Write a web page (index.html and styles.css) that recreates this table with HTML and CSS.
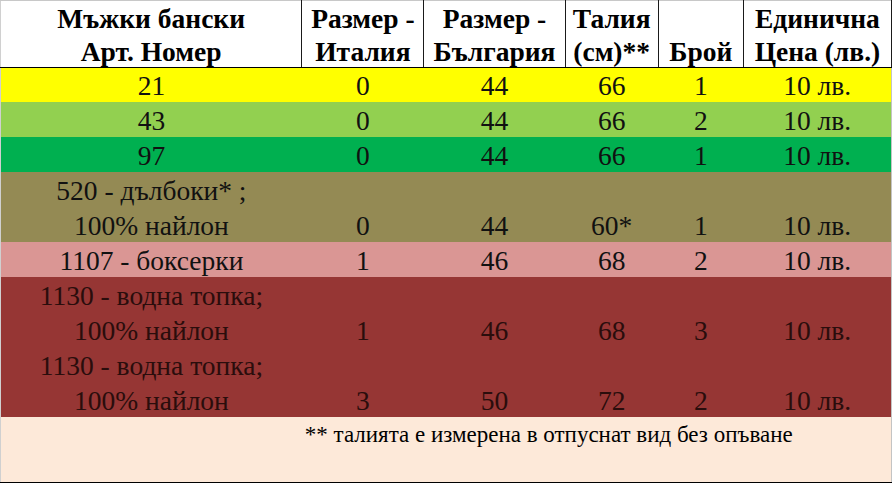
FILE: index.html
```html
<!DOCTYPE html>
<html lang="bg">
<head>
<meta charset="utf-8">
<title>Мъжки бански</title>
<link rel="stylesheet" href="styles.css">
</head>
<body>
<table class="sheet">
  <colgroup>
    <col class="w1"><col class="w2"><col class="w3"><col class="w4"><col class="w5"><col class="w6">
  </colgroup>
  <thead>
    <tr class="head">
      <th><span class="t">Мъжки бански<br>Арт. Номер</span></th>
      <th><span class="t">Размер -<br>Италия</span></th>
      <th><span class="t">Размер -<br>България</span></th>
      <th><span class="t">Талия<br>(см)**</span></th>
      <th><span class="t">Брой</span></th>
      <th><span class="t">Единична<br>Цена (лв.)</span></th>
    </tr>
  </thead>
  <tbody>
    <tr class="r-yellow first">
      <td><span class="t">21</span></td><td><span class="t">0</span></td><td><span class="t">44</span></td><td><span class="t">66</span></td><td><span class="t">1</span></td><td><span class="t">10 лв.</span></td>
    </tr>
    <tr class="r-lime">
      <td><span class="t">43</span></td><td><span class="t">0</span></td><td><span class="t">44</span></td><td><span class="t">66</span></td><td><span class="t">2</span></td><td><span class="t">10 лв.</span></td>
    </tr>
    <tr class="r-green">
      <td><span class="t">97</span></td><td><span class="t">0</span></td><td><span class="t">44</span></td><td><span class="t">66</span></td><td><span class="t">1</span></td><td><span class="t">10 лв.</span></td>
    </tr>
    <tr class="r-olive">
      <td><span class="t">520 - дълбоки* ;<br>100% найлон</span></td><td><span class="t">0</span></td><td><span class="t">44</span></td><td><span class="t">60*</span></td><td><span class="t">1</span></td><td><span class="t">10 лв.</span></td>
    </tr>
    <tr class="r-pink">
      <td><span class="t">1107 - боксерки</span></td><td><span class="t">1</span></td><td><span class="t">46</span></td><td><span class="t">68</span></td><td><span class="t">2</span></td><td><span class="t">10 лв.</span></td>
    </tr>
    <tr class="r-red">
      <td><span class="t">1130 - водна топка;<br>100% найлон</span></td><td><span class="t">1</span></td><td><span class="t">46</span></td><td><span class="t">68</span></td><td><span class="t">3</span></td><td><span class="t">10 лв.</span></td>
    </tr>
    <tr class="r-red">
      <td><span class="t">1130 - водна топка;<br>100% найлон</span></td><td><span class="t">3</span></td><td><span class="t">50</span></td><td><span class="t">72</span></td><td><span class="t">2</span></td><td><span class="t">10 лв.</span></td>
    </tr>
    <tr class="r-note">
      <td></td>
      <td class="note" colspan="5">** талията е измерена в отпуснат вид без опъване</td>
    </tr>
  </tbody>
</table>
</body>
</html>
```

FILE: styles.css
```css
html, body {
  margin: 0;
  padding: 0;
  background: #ffffff;
}

.sheet {
  border-collapse: collapse;
  table-layout: fixed;
  width: 892px;
  font-family: "Liberation Serif", "Times New Roman", serif;
  font-size: 27.5px;
  color: #111;
  border-left: 1px solid #d0d0d0;
  border-right: 1px solid #c4c4c4;
}

.w1 { width: 301px; }
.w2 { width: 122px; }
.w3 { width: 141px; }
.w4 { width: 93px; }
.w5 { width: 85px; }
.w6 { width: 148px; }

th, td {
  padding: 0;
  text-align: center;
  vertical-align: bottom;
  line-height: 35px;
  white-space: nowrap;
}

.t {
  line-height: 1;
  vertical-align: -1px;
}

.head th {
  height: 66px;
  line-height: 33px;
  font-weight: bold;
  color: #000;
  background: #ffffff;
  border-top: 1px solid #c8c8c8;
  border-bottom: 1px solid #000;
  border-right: 1px solid #1a1a1a;
}

.first td { height: 34px; line-height: 34px; }

.r-yellow { background: #ffff00; }
.r-lime { background: #92d050; }
.r-green { background: #00b050; }
.r-olive { background: #948a54; }
.r-pink { background: #da9694; }
.r-red { background: #963634; color: #2a0d0c; }
.r-note { background: #fde9d9; }

.r-note td {
  height: 65px;
  vertical-align: top;
  border-bottom: 1px solid #000;
}

.note {
  text-align: left;
  padding-left: 3px;
  font-size: 23px;
  color: #000;
}
```
